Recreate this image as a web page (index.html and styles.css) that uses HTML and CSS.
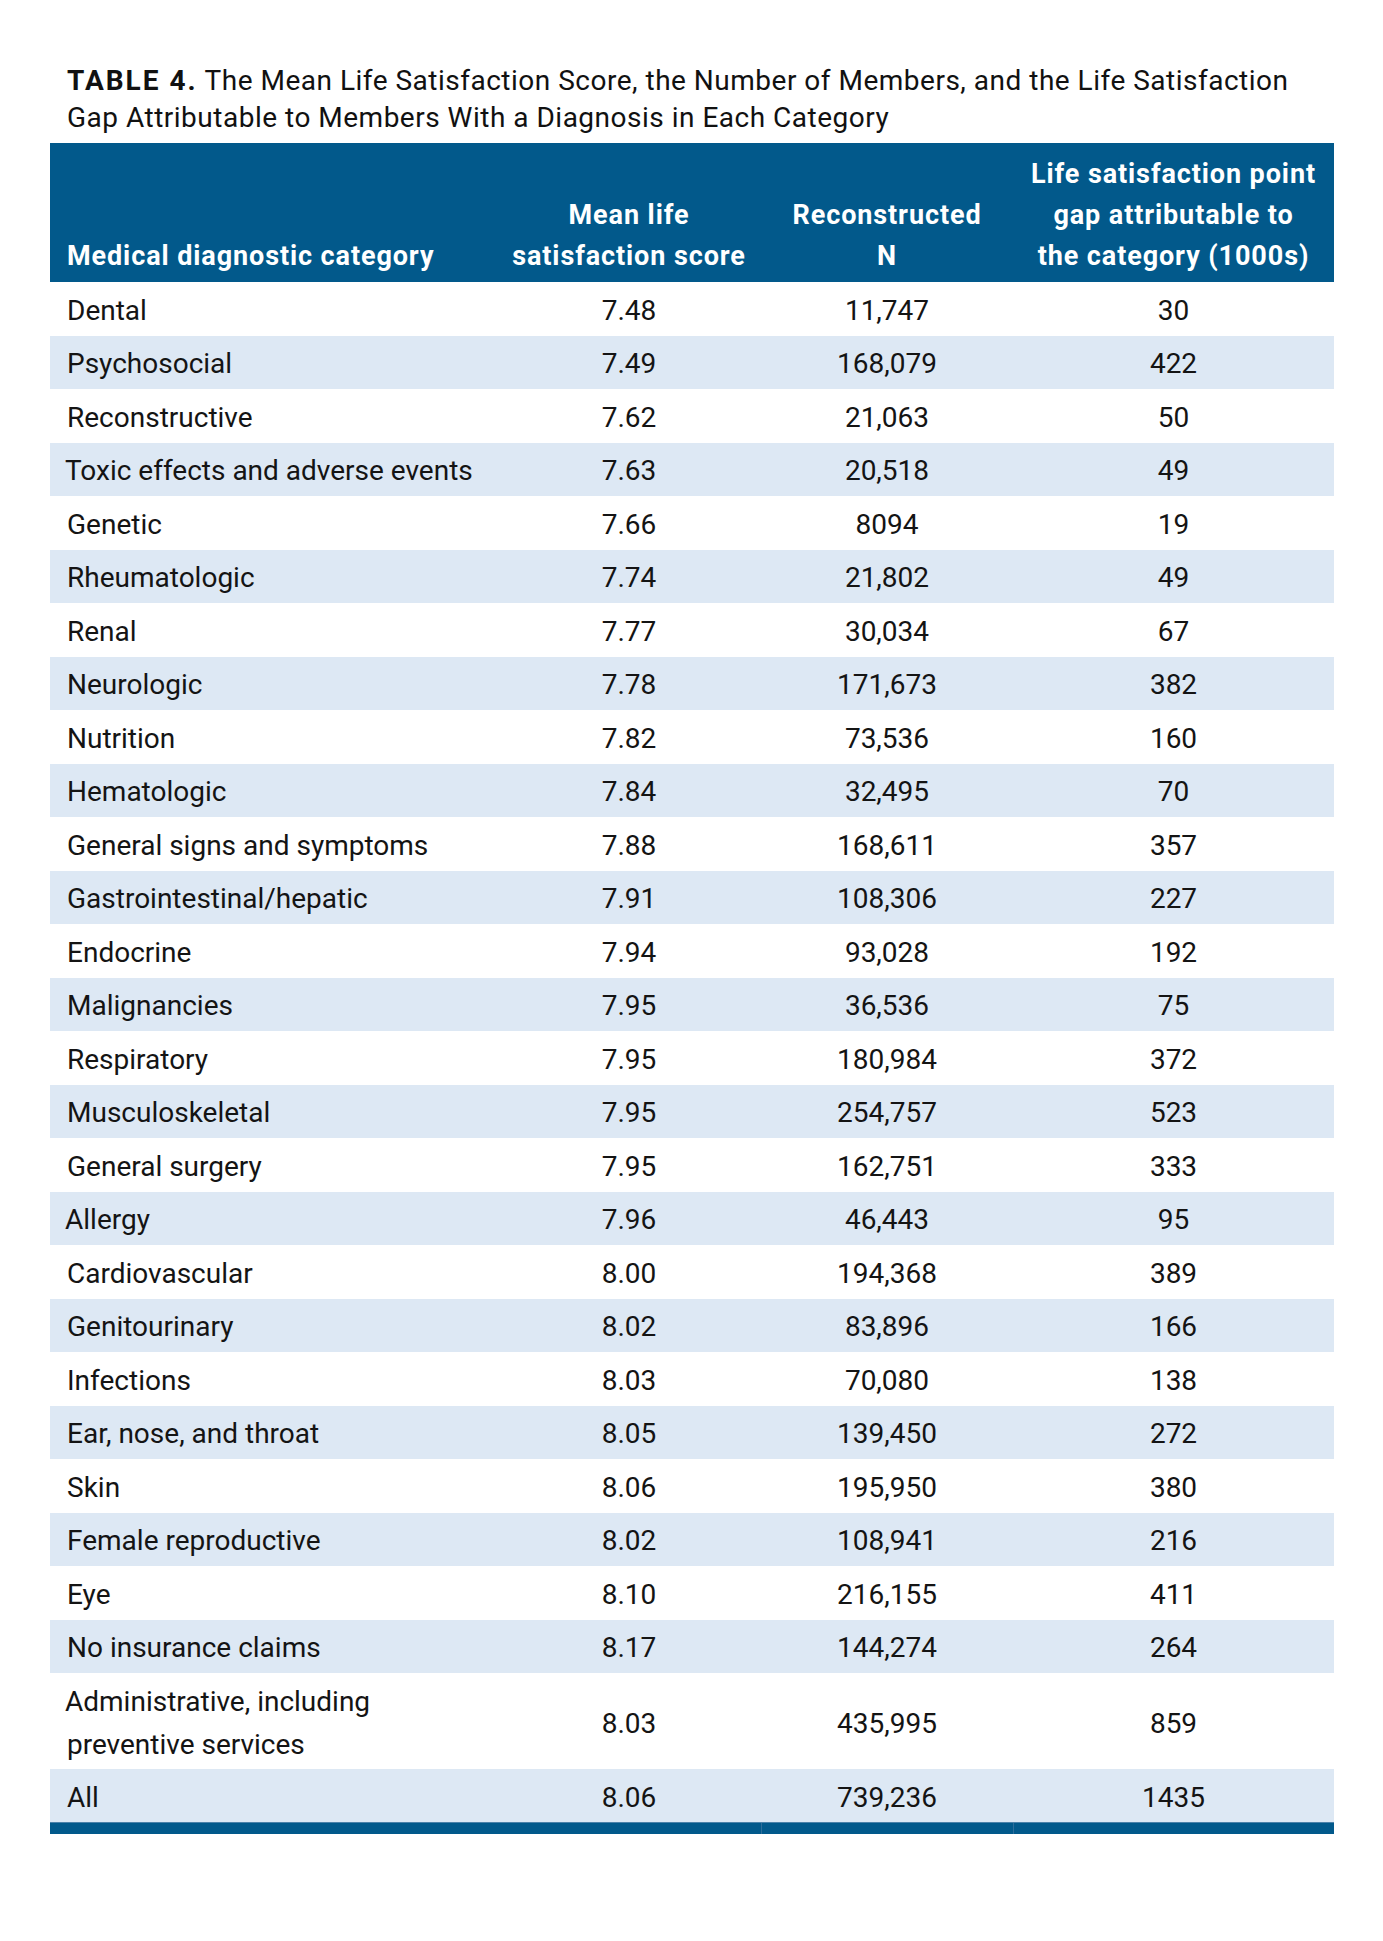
FILE: index.html
```html
<!DOCTYPE html>
<html lang="en">
<head>
<meta charset="utf-8">
<title>Table 4</title>
<link rel="stylesheet" href="styles.css">
</head>
<body>
<div class="page">
  <p class="caption"><strong>TABLE 4.</strong> The Mean Life Satisfaction Score, the Number of Members, and the Life Satisfaction<br>Gap Attributable to Members With a Diagnosis in Each Category</p>
  <table class="data">
    <colgroup>
      <col class="c1"><col class="c2"><col class="c3"><col class="c4">
    </colgroup>
    <thead>
      <tr>
        <th class="left">Medical diagnostic category</th>
        <th>Mean life<br>satisfaction score</th>
        <th>Reconstructed<br>N</th>
        <th>Life satisfaction point<br>gap attributable to<br>the category (1000s)</th>
      </tr>
    </thead>
    <tbody>
      <tr><td>Dental</td><td>7.48</td><td>11,747</td><td>30</td></tr>
      <tr><td>Psychosocial</td><td>7.49</td><td>168,079</td><td>422</td></tr>
      <tr><td>Reconstructive</td><td>7.62</td><td>21,063</td><td>50</td></tr>
      <tr><td class="nudge">Toxic effects and adverse events</td><td>7.63</td><td>20,518</td><td>49</td></tr>
      <tr><td>Genetic</td><td>7.66</td><td>8094</td><td>19</td></tr>
      <tr><td>Rheumatologic</td><td>7.74</td><td>21,802</td><td>49</td></tr>
      <tr><td>Renal</td><td>7.77</td><td>30,034</td><td>67</td></tr>
      <tr><td>Neurologic</td><td>7.78</td><td>171,673</td><td>382</td></tr>
      <tr><td>Nutrition</td><td>7.82</td><td>73,536</td><td>160</td></tr>
      <tr><td>Hematologic</td><td>7.84</td><td>32,495</td><td>70</td></tr>
      <tr><td>General signs and symptoms</td><td>7.88</td><td>168,611</td><td>357</td></tr>
      <tr><td>Gastrointestinal/hepatic</td><td>7.91</td><td>108,306</td><td>227</td></tr>
      <tr><td>Endocrine</td><td>7.94</td><td>93,028</td><td>192</td></tr>
      <tr><td>Malignancies</td><td>7.95</td><td>36,536</td><td>75</td></tr>
      <tr><td>Respiratory</td><td>7.95</td><td>180,984</td><td>372</td></tr>
      <tr><td>Musculoskeletal</td><td>7.95</td><td>254,757</td><td>523</td></tr>
      <tr><td>General surgery</td><td>7.95</td><td>162,751</td><td>333</td></tr>
      <tr><td class="nudge">Allergy</td><td>7.96</td><td>46,443</td><td>95</td></tr>
      <tr><td>Cardiovascular</td><td>8.00</td><td>194,368</td><td>389</td></tr>
      <tr><td>Genitourinary</td><td>8.02</td><td>83,896</td><td>166</td></tr>
      <tr><td>Infections</td><td>8.03</td><td>70,080</td><td>138</td></tr>
      <tr><td>Ear, nose, and throat</td><td>8.05</td><td>139,450</td><td>272</td></tr>
      <tr><td>Skin</td><td>8.06</td><td>195,950</td><td>380</td></tr>
      <tr><td>Female reproductive</td><td>8.02</td><td>108,941</td><td>216</td></tr>
      <tr><td>Eye</td><td>8.10</td><td>216,155</td><td>411</td></tr>
      <tr><td>No insurance claims</td><td>8.17</td><td>144,274</td><td>264</td></tr>
      <tr class="tall"><td class="nudge">Administrative, including<br><span class="indent">preventive services</span></td><td>8.03</td><td>435,995</td><td>859</td></tr>
      <tr><td>All</td><td>8.06</td><td>739,236</td><td>1435</td></tr>
    </tbody>
    <tfoot>
      <tr><td></td><td></td><td></td><td></td></tr>
    </tfoot>
  </table>
</div>
</body>
</html>
```

FILE: styles.css
```css
html, body {
  margin: 0;
  padding: 0;
  background: #ffffff;
}

body {
  font-family: Roboto, "Liberation Sans", Arial, sans-serif;
  color: #141414;
}

.page {
  padding: 62px 0 0 50px;
  width: 1284px;
}

.caption {
  margin: 0 0 7px 0;
  padding-left: 17px;
  font-size: 28px;
  line-height: 37px;
  letter-spacing: 0.5px;
  color: #111111;
  white-space: nowrap;
}

.caption strong {
  font-weight: 700;
  letter-spacing: 2px;
}

.data {
  width: 1284px;
  border-collapse: collapse;
  table-layout: fixed;
  font-size: 28px;
}

.c1 { width: 447px; }
.c2 { width: 264px; }
.c3 { width: 252px; }
.c4 { width: 321px; }

.data thead th {
  background: #02598b;
  color: #ffffff;
  font-weight: 700;
  font-size: 27px;
  letter-spacing: 0.9px;
  line-height: 41px;
  height: 138px;
  box-sizing: border-box;
  padding: 11px 0 5px 0;
  vertical-align: bottom;
  text-align: center;
}

.data thead th.left {
  text-align: left;
  padding-left: 17px;
}

.data tbody tr {
  height: 53.5px;
}

.data tbody td {
  padding: 4px 0 0 0;
  text-align: center;
  vertical-align: middle;
  line-height: 34px;
}

.data tbody td:first-child {
  text-align: left;
  padding-left: 17px;
}

.data tbody td.nudge {
  padding-left: 15px;
}

.indent {
  padding-left: 2px;
}

.data tbody tr:nth-child(even) {
  background: #dde8f4;
}

.data tbody tr.tall {
  height: 96px;
}

.data tbody tr.tall td {
  line-height: 43px;
}

.data tfoot td {
  height: 11px;
  padding: 0;
  background: #02598b;
  border-top: 1px solid #4c82aa;
}

.data tfoot td:nth-child(n+3) {
  border-left: 1px solid #2e6d9a;
}
```
